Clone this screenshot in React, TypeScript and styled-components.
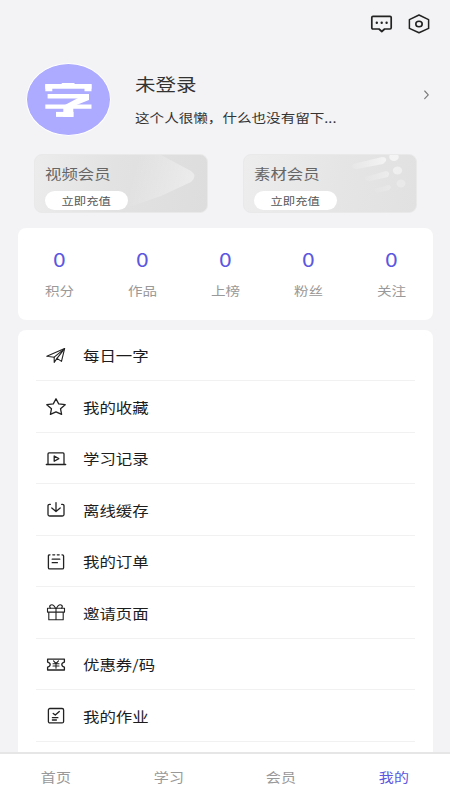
import React from 'react';
import styled, { createGlobalStyle } from 'styled-components';

const GlobalStyle = createGlobalStyle`
  * { box-sizing: border-box; }
  html, body { margin: 0; padding: 0; background: #f3f3f5; }
  body { font-family: "Noto Sans CJK SC", "Noto Sans", sans-serif; overflow: hidden; }
`;

const Screen = styled.div`
  width: 450px;
  height: 800px;
  display: flex;
  flex-direction: column;
  overflow: hidden;
  background: #f3f3f5;
`;

const Text = styled.span<{ $size: number; $color: string; $center?: boolean }>`
  display: block;
  white-space: nowrap;
  font-size: ${(p) => p.$size}px;
  line-height: 20px;
  color: ${(p) => p.$color};
  transform: scaleX(1.165);
  transform-origin: ${(p) => (p.$center ? 'center' : 'left center')};
`;

const Icon = styled.svg`
  display: block;
  flex: none;
  fill: none;
  stroke: #222;
  stroke-width: 1.3;
  stroke-linecap: round;
  stroke-linejoin: round;
  overflow: visible;
`;

const TopBar = styled.header`
  height: 48px;
  flex: none;
  display: flex;
  justify-content: flex-end;
  gap: 15px;
  padding: 13px 20px 0 0;
`;

const Profile = styled.section`
  height: 106px;
  flex: none;
  display: flex;
  align-items: flex-start;
  padding: 15px 20px 0 26px;
`;

const Avatar = styled.div`
  width: 85px;
  height: 73px;
  flex: none;
  border-radius: 50%;
  border: 1px solid #fff;
  background: #adabff;
`;

const ProfileInfo = styled.div`
  flex: 1;
  display: flex;
  flex-direction: column;
  gap: 14px;
  padding: 11px 0 0 24px;
`;

const ArrowBox = styled.div`
  padding: 26px 0 0;
`;

const Memberships = styled.section`
  height: 74px;
  flex: none;
  display: flex;
  gap: 35px;
  padding-left: 34px;
`;

const MemberCard = styled.div`
  position: relative;
  width: 174px;
  height: 59px;
  padding: 8px 0 0 10px;
  border-radius: 8px;
  overflow: hidden;
  background: linear-gradient(100deg, #ececed 0%, #e2e2e2 45%, #dddddd 100%);
  border: 1px solid #e9e9ea;
`;

const PaleMemberCard = styled(MemberCard)`
  background: linear-gradient(100deg, #ededee 0%, #e5e5e5 55%, #e1e1e1 100%);
`;

const CardArt = styled.svg`
  position: absolute;
  inset: 0;
  width: 172px;
  height: 56px;
`;

const CardBody = styled.div`
  position: relative;
`;

const RechargeButton = styled.button`
  display: flex;
  justify-content: center;
  align-items: center;
  width: 83px;
  height: 19px;
  margin: 8px 0 0;
  padding: 0;
  border: 0;
  border-radius: 10px;
  background: #fff;
  font-family: inherit;
`;

const Stats = styled.section`
  width: 415px;
  height: 91.5px;
  flex: none;
  margin: 0 0 10px 18px;
  display: grid;
  grid-template-columns: repeat(5, 1fr);
  border-radius: 8px;
  background: #fff;
`;

const Stat = styled.div`
  display: flex;
  flex-direction: column;
  align-items: center;
  gap: 12px;
  padding-top: 21px;
`;

const Menu = styled.main`
  width: 415px;
  height: 422.5px;
  flex: none;
  margin-left: 18px;
  padding: 0 18px;
  overflow: hidden;
  border-radius: 8px 8px 0 0;
  background: #fff;
`;

const MenuRow = styled.div`
  height: 51.5px;
  display: flex;
  align-items: center;
  gap: 17px;
  padding: 1px 0 0 10px;
  border-bottom: 1px solid #f1f1f2;
`;

const TabBar = styled.nav`
  height: 48px;
  flex: none;
  display: grid;
  grid-template-columns: repeat(4, 1fr);
  align-items: center;
  border-top: 2px solid #e6e6e7;
  background: #fff;
`;

const Tab = styled.div`
  display: flex;
  justify-content: center;
`;

const menu: { label: string; icon: React.ReactNode }[] = [
  {
    label: '每日一字',
    icon: (
      <g strokeWidth="1.1">
        <path d="M.8 10.3 18.6 2.6 15.5 15.4 11 12.4 8.2 16.4V11.2L.8 10.3Z" />
        <path d="M8.2 11.2 18.6 2.6 11 12.4" />
      </g>
    ),
  },
  {
    label: '我的收藏',
    icon: <path d="m10 1.8 2.7 5.1 6.5.8-4.7 4 1.1 5.7-5.6-2.6-5.6 2.6 1.1-5.7-4.7-4 6.5-.8Z" />,
  },
  {
    label: '学习记录',
    icon: (
      <>
        <path d="M2 15.3V4.9q0-1 1-1h14q1 0 1 1v10.4M.3 15.5h19.4" />
        <path d="m8.2 7 4.6 2.6-4.6 2.6Z" />
      </>
    ),
  },
  {
    label: '离线缓存',
    icon: (
      <>
        <path d="M4.4 4.3H3.6Q2 4.3 2 5.8v8.7Q2 16 3.6 16h12.8q1.6 0 1.6-1.5V5.8q0-1.5-1.6-1.5h-.8" />
        <path d="M10 2.6v8.7M5.8 8 10 11.5 14.2 8" />
      </>
    ),
  },
  {
    label: '我的订单',
    icon: (
      <>
        <path d="M4 2.8H3.7Q2.4 2.8 2.4 4v11.7q0 1.2 1.3 1.2h12.6q1.3 0 1.3-1.2V4q0-1.2-1.3-1.2H16M6.8 2.8h1.9M11.3 2.8h1.9" />
        <path d="M6.2 7.2h7.6M6.2 10.7h5.2" />
      </>
    ),
  },
  {
    label: '邀请页面',
    icon: (
      <g strokeWidth="1.1">
        <path d="M1.5 5.2h17v3.9h-17ZM2.8 9.1v7.7h14.4V9.1M10 5.2v11.6" />
        <path d="M9.5 5.2C7.8 1.5 5.7 1.2 4.4 2.2c-1.1.9-.7 2.1 0 3M10.5 5.2c1.7-3.7 3.8-4 5.1-3 1.1.9.7 2.1 0 3" />
      </g>
    ),
  },
  {
    label: '优惠券/码',
    icon: (
      <>
        <path d="M1.6 4.2h16.8v2.9q-2.6.6-2.6 2.5t2.6 2.5V15H1.6v-2.9q2.6-.6 2.6-2.5T1.6 7.1Z" />
        <path strokeWidth="1.1" d="m7.5 5.9 2.5 2.6 2.5-2.6M7 8.7h6M7 11h6M10 8.5v4.7" />
      </>
    ),
  },
  {
    label: '我的作业',
    icon: (
      <>
        <rect x="2.4" y="2.5" width="15.2" height="14.4" rx="1.5" />
        <path d="m7.2 7.4 2.1 1.7 4-3.6M6.4 11.7h5.5M6.4 14h4" />
      </>
    ),
  },
];

const stats = ['积分', '作品', '上榜', '粉丝', '关注'];
const tabs = ['首页', '学习', '会员', '我的'];

export default function App() {
  return (
    <>
      <GlobalStyle />
      <Screen>
        <TopBar>
          <Icon width="23" height="22" viewBox="0 0 23 22">
            <path
              strokeWidth="1.7"
              d="M3 3.3h17q1.2 0 1.2 1.2v10.3q0 1.2-1.2 1.2h-5.4l-2.8 2.5L9 16H3q-1.2 0-1.2-1.2V4.5Q1.8 3.3 3 3.3Z"
            />
            <path strokeWidth="2.4" d="M6.8 9.8h.01M11.7 9.8h.01M16.6 9.8h.01" />
          </Icon>
          <Icon width="22" height="22" viewBox="0 0 22 22">
            <path strokeWidth="1.5" d="m11 2 9.6 4.7v8.7L11 19.8l-9.6-4.4V6.7Z" />
            <ellipse cx="11" cy="11" rx="3.2" ry="2.7" strokeWidth="1.6" />
          </Icon>
        </TopBar>

        <Profile>
          <Avatar>
            <Icon width="83" height="71" viewBox="0 0 83 71">
              <g stroke="#fff" strokeLinecap="butt" strokeLinejoin="miter">
                <path strokeWidth="4.6" d="M18.3 22.4H64.5" />
                <path strokeWidth="3" d="M34.7 20.5H47.5" />
                <path strokeWidth="7" d="M21.8 20.3V27.2M61 20.3V27.2" />
                <path strokeWidth="4.4" d="M20.6 32.2H62M18.3 42.6H64.5" />
                <path strokeWidth="5" d="M29 50.4H46.5" />
                <path strokeWidth="10" d="M41.3 41V53" />
              </g>
              <path fill="#fff" stroke="none" d="M51 34H62V36L47 42H36Z" />
            </Icon>
          </Avatar>
          <ProfileInfo>
            <Text $size={17.6} $color="#333">未登录</Text>
            <Text $size={12.5} $color="#333">这个人很懒，什么也没有留下...</Text>
          </ProfileInfo>
          <ArrowBox>
            <Icon width="7" height="12" viewBox="0 0 7 12">
              <path stroke="#777" strokeWidth="1.1" d="m1.7 2 3.6 3.8L1.7 9.7" />
            </Icon>
          </ArrowBox>
        </Profile>

        <Memberships>
          <MemberCard>
            <CardArt viewBox="0 0 172 56">
              <defs>
                <linearGradient id="play" x1="0" x2="1" y1="0" y2="0.2">
                  <stop offset="0.2" stopColor="#fff" stopOpacity="0" />
                  <stop offset="1" stopColor="#fff" stopOpacity=".4" />
                </linearGradient>
              </defs>
              <path fill="url(#play)" d="M88 0H126L156 16Q163 21 156 27L126 41L88 54Z" />
            </CardArt>
            <CardBody>
              <Text $size={14.1} $color="#666">视频会员</Text>
              <RechargeButton>
                <Text $size={10.6} $color="#555" $center>立即充值</Text>
              </RechargeButton>
            </CardBody>
          </MemberCard>
          <PaleMemberCard>
            <CardArt viewBox="0 0 172 56">
              <defs>
                <linearGradient id="trail" x1="0" x2="1" y1="0" y2="0">
                  <stop offset="0" stopColor="#fff" stopOpacity=".1" />
                  <stop offset="1" stopColor="#fff" stopOpacity=".6" />
                </linearGradient>
              </defs>
              <path fill="url(#trail)" d="M109 9 138 2Q143 2 142 6L139 9 113 14Q106 14 109 9Z" />
              <path fill="url(#trail)" opacity=".6" d="M121 22 142 16Q147 17 144 22L126 26Q120 26 121 22Z" />
              <path fill="url(#trail)" opacity=".35" d="M130 34 145 30Q149 32 145 35L132 38Z" />
              <g fill="#fff">
                <ellipse cx="150" cy="2" rx="4.8" ry="4" opacity=".6" />
                <ellipse cx="153.5" cy="15.5" rx="4.7" ry="4" opacity=".45" />
                <ellipse cx="157" cy="28.5" rx="4.5" ry="4" opacity=".25" />
              </g>
            </CardArt>
            <CardBody>
              <Text $size={14.1} $color="#666">素材会员</Text>
              <RechargeButton>
                <Text $size={10.6} $color="#555" $center>立即充值</Text>
              </RechargeButton>
            </CardBody>
          </PaleMemberCard>
        </Memberships>

        <Stats>
          {stats.map((label) => (
            <Stat key={label}>
              <Text $size={19.6} $color="#5c57e0" $center>0</Text>
              <Text $size={12.5} $color="#999" $center>{label}</Text>
            </Stat>
          ))}
        </Stats>

        <Menu>
          {menu.map((item) => (
            <MenuRow key={item.label}>
              <Icon width="20" height="19" viewBox="0 0 20 19">{item.icon}</Icon>
              <Text $size={14.1} $color="#1c1c1c">{item.label}</Text>
            </MenuRow>
          ))}
        </Menu>

        <TabBar>
          {tabs.map((label) => (
            <Tab key={label}>
              <Text $size={12.9} $color={label === '我的' ? '#5c57e0' : '#999'} $center>{label}</Text>
            </Tab>
          ))}
        </TabBar>
      </Screen>
    </>
  );
}
